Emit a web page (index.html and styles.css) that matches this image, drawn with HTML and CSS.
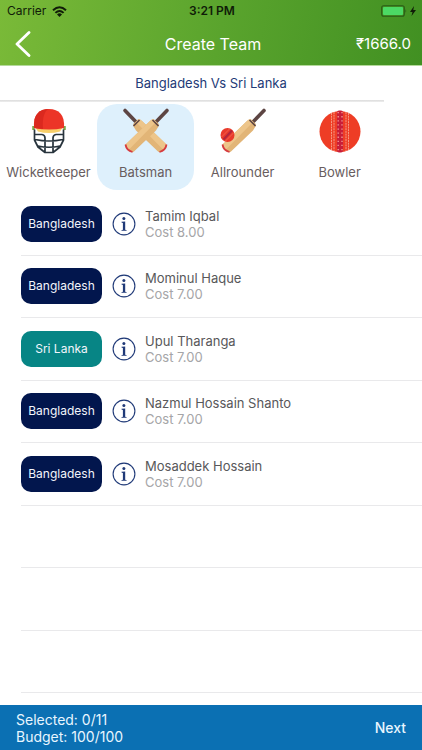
FILE: index.html
```html
<!DOCTYPE html>
<html lang="en">
<head>
<meta charset="utf-8">
<meta name="viewport" content="width=device-width, initial-scale=1">
<title>Create Team</title>
<link rel="stylesheet" href="styles.css">
</head>
<body>
<svg class="defs" aria-hidden="true">
  <defs>
    <symbol id="bat" viewBox="0 0 48 48">
      <path d="M32 17 45 3.500" stroke="#5d4543" stroke-width="3.600" stroke-linecap="round"/>
      <path d="M28 14Q31 11 33 13.500L36 16Q38 18 35.500 21L34 23.500 12 44.500Q10 46 8 44L4 40.500Q2.500 38.500 3.500 37.500Z" fill="#e2b577"/>
      <path d="M28 14Q31 11 33 13.500L34 15 7 42.500 4 40.500Q2.500 38.500 3.500 37.500Z" fill="#edc58a"/>
      <path d="M30.500 13 36.500 19" stroke="#5d4543" stroke-width="1.600"/>
      <path d="M3.500 37.500Q4.500 43.500 10.500 45" fill="none" stroke="#d63b3f" stroke-width="1.800"/>
    </symbol>
    <symbol id="info" viewBox="0 0 24 24">
      <circle cx="12" cy="12" r="10.900" fill="none" stroke="#203a78" stroke-width="1.100"/>
      <circle cx="11.900" cy="6.500" r="1.500" fill="#203a78"/>
      <path d="M9.500 9.800 13.200 9.500V17.800L14.700 18.200V18.700H9.400V18.200L10.900 17.800V10.900L9.500 10.500Z" fill="#203a78"/>
    </symbol>
  </defs>
</svg>
<header class="top">
  <div class="status">
    <span class="carrier">Carrier
      <svg class="wifi" viewBox="0 0 15 11" aria-hidden="true"><g fill="none" stroke="#101c08" stroke-width="2"><path d="M1 4.200Q7.500-1.800 14 4.200M3.400 6.900Q7.500 3 11.600 6.900"/></g><path d="M5 8.400Q7.500 6.300 10 8.400L7.500 11Z" fill="#101c08"/></svg>
    </span>
    <span class="clock">3:21 PM</span>
    <svg class="battery" viewBox="0 0 36 12" aria-hidden="true"><rect x=".7" y=".7" width="22.600" height="10.600" rx="2" fill="none" stroke="#2a5a17" stroke-width="1.100"/><rect x="2" y="2" width="20" height="8" rx="1" fill="#4cd964"/><path d="M24.500 4q1.500 2 0 4z" fill="#2a5a17"/><path d="M33 1 29 7h2.500L30.500 11 35 5h-2.700z" fill="#101c08"/></svg>
  </div>
  <div class="nav">
    <button class="back" type="button" aria-label="Back"><svg viewBox="0 0 16 26" aria-hidden="true"><path d="M14 1.500 2 13 14 24.500" fill="none" stroke="#fff" stroke-width="2.800" stroke-linecap="round" stroke-linejoin="round"/></svg></button>
    <h1>Create Team</h1>
    <span class="balance">₹1666.0</span>
  </div>
</header>
<h2 class="match">Bangladesh Vs Sri Lanka</h2>
<nav class="roles">
  <button type="button"><svg viewBox="0 0 48 48" aria-hidden="true">
    <path d="M8.500 19v4M39.500 19v4" fill="none" stroke="#7ea74a" stroke-width="2.500"/>
    <path d="M10 20H38L35 24.500Q24 27.500 13 24.500Z" fill="#f8cf69"/>
    <path d="M9 21C8 8 14 2 24 2S40 8 39 21Q24 24 9 21Z" fill="#ec3527"/>
    <path d="M18 22C17 10 20 3 24 2Q13 1 9.500 12L9 21Z" fill="#db291f"/>
    <g fill="none" stroke="#28343d" stroke-width="1.700" stroke-linejoin="round"><path d="M9.500 22.500V33L13 40 20 45.500H28L35 40 38.500 33V22.500M10 27.500H17Q20 28 20 31V45.500M38 27.500H31Q28 28 28 31V45.500M10 32.500Q24 35.500 38 32.500M13 39Q24 41.500 35 39"/></g>
  </svg>Wicketkeeper</button>
  <button type="button" class="active" aria-pressed="true"><svg viewBox="0 0 48 48" aria-hidden="true"><g transform="matrix(-1 0 0 1 48 0)"><use href="#bat" width="48" height="48"/></g><use href="#bat" width="48" height="48"/></svg>Batsman</button>
  <button type="button"><svg viewBox="0 0 48 48" aria-hidden="true"><use href="#bat" width="48" height="48"/><circle cx="8.500" cy="28" r="7" fill="#e93a2b"/><path d="M4.500 32.500 13 23.500" stroke="#b3263c" stroke-width="2.200"/><path d="M2.500 30 10.500 22M6.500 34 14.500 26" stroke="#f06a58" stroke-width=".8"/></svg>Allrounder</button>
  <button type="button"><svg viewBox="0 0 48 48" aria-hidden="true"><circle cx="24" cy="24.500" r="20.500" fill="#ee3d25"/><rect x="21" y="3.500" width="6" height="42" rx="2" fill="#c81e39"/><path d="M15.500 6v37M18 5v39M30 5v39M32.500 6v37" stroke="#f79a83" stroke-width="1" stroke-dasharray="2 .7"/><path d="M22.200 5v39M26 5v39" stroke="#f5a193" stroke-width="1.300" stroke-dasharray="1.300 2.800"/></svg>Bowler</button>
</nav>
<main>
  <ul class="players">
    <li><span class="team">Bangladesh</span><button class="info" type="button" aria-label="About Tamim Iqbal"><svg><use href="#info"/></svg></button><p>Tamim Iqbal<small>Cost 8.00</small></p></li>
    <li><span class="team">Bangladesh</span><button class="info" type="button" aria-label="About Mominul Haque"><svg><use href="#info"/></svg></button><p>Mominul Haque<small>Cost 7.00</small></p></li>
    <li><span class="team lanka">Sri Lanka</span><button class="info" type="button" aria-label="About Upul Tharanga"><svg><use href="#info"/></svg></button><p>Upul Tharanga<small>Cost 7.00</small></p></li>
    <li><span class="team">Bangladesh</span><button class="info" type="button" aria-label="About Nazmul Hossain Shanto"><svg><use href="#info"/></svg></button><p>Nazmul Hossain Shanto<small>Cost 7.00</small></p></li>
    <li><span class="team">Bangladesh</span><button class="info" type="button" aria-label="About Mosaddek Hossain"><svg><use href="#info"/></svg></button><p>Mosaddek Hossain<small>Cost 7.00</small></p></li>
    <li></li><li></li><li></li>
  </ul>
</main>
<footer>
  <p>Selected: 0/11<br>Budget: 100/100</p>
  <button type="button">Next</button>
</footer>
</body>
</html>
```
FILE: styles.css
```css
* { box-sizing: border-box; }
body {
  margin: 0;
  min-height: 100vh;
  display: flex;
  flex-direction: column;
  background: #fff;
  font-family: Inter, "Liberation Sans", sans-serif;
  font-size: 13px;
  line-height: 16px;
}
h1, h2, p, ul { margin: 0; padding: 0; font-weight: 400; }
button {
  border: 0;
  padding: 0;
  background: none;
  color: inherit;
  font: inherit;
}
svg { display: block; }
.defs { position: absolute; width: 0; height: 0; }

.top {
  color: #fff;
  background: linear-gradient(100deg, #7aba38, #5aa42d 52%, #419022);
}
.status, .nav {
  display: grid;
  grid-template-columns: 1fr auto 1fr;
  align-items: center;
}
.status { height: 22px; padding: 0 5px 0 7px; color: #101c08; font-size: 12px; }
.carrier { display: flex; align-items: center; gap: 6px; }
.wifi { width: 15px; height: 11px; }
.clock { font-weight: 600; }
.battery { width: 36px; height: 12px; justify-self: end; }
.nav { height: 44px; padding: 0 11px 0 15px; border-bottom: 1px solid #b4d99b; }
.nav h1 { font-size: 16px; line-height: 20px; }
.back { justify-self: start; }
.back svg { width: 16px; height: 26px; }
.balance { justify-self: end; font-size: 15px; }

.match {
  display: grid;
  height: 36px;
  padding-bottom: 2px;
  align-items: center;
  text-align: center;
  font-size: 13px;
  color: #243b77;
  background: linear-gradient(#dcdcdc, #eee) bottom left / 91% 2px no-repeat;
}

.roles {
  display: grid;
  grid-template-columns: repeat(4, 23%);
  padding-top: 2px;
}
.roles button {
  display: flex;
  flex-direction: column;
  align-items: center;
  gap: 9px;
  height: 86px;
  padding-top: 3px;
  border-radius: 20px;
  color: #685d5e;
  font-size: 13px;
}
.roles svg { width: 48px; height: 48px; }
.roles .active { background: #def0fc; }

main { flex: 1; display: grid; padding: 3px 0 12px 21px; }
.players { display: grid; grid-auto-rows: 1fr; list-style: none; }
.players li {
  display: flex;
  align-items: center;
  border-bottom: 1px solid #e9e9eb;
}
.team {
  width: 81px;
  border-radius: 10px;
  font-size: 12px;
  line-height: 36px;
  text-align: center;
  color: #f2f5fc;
  background: #02164d;
}
.lanka { background: #078585; }
.info { margin: 0 9px 0 10px; }
.info svg { width: 24px; height: 24px; }
.players p { color: #58585a; }
.players small { display: block; color: #a5a5a7; font-size: 13px; }

footer {
  display: flex;
  justify-content: space-between;
  align-items: center;
  height: 45px;
  padding: 0 16px;
  color: #e8f6ff;
  background: #0b70b3;
  font-size: 14px;
  line-height: 17px;
}
footer button { font-weight: 500; }
```
